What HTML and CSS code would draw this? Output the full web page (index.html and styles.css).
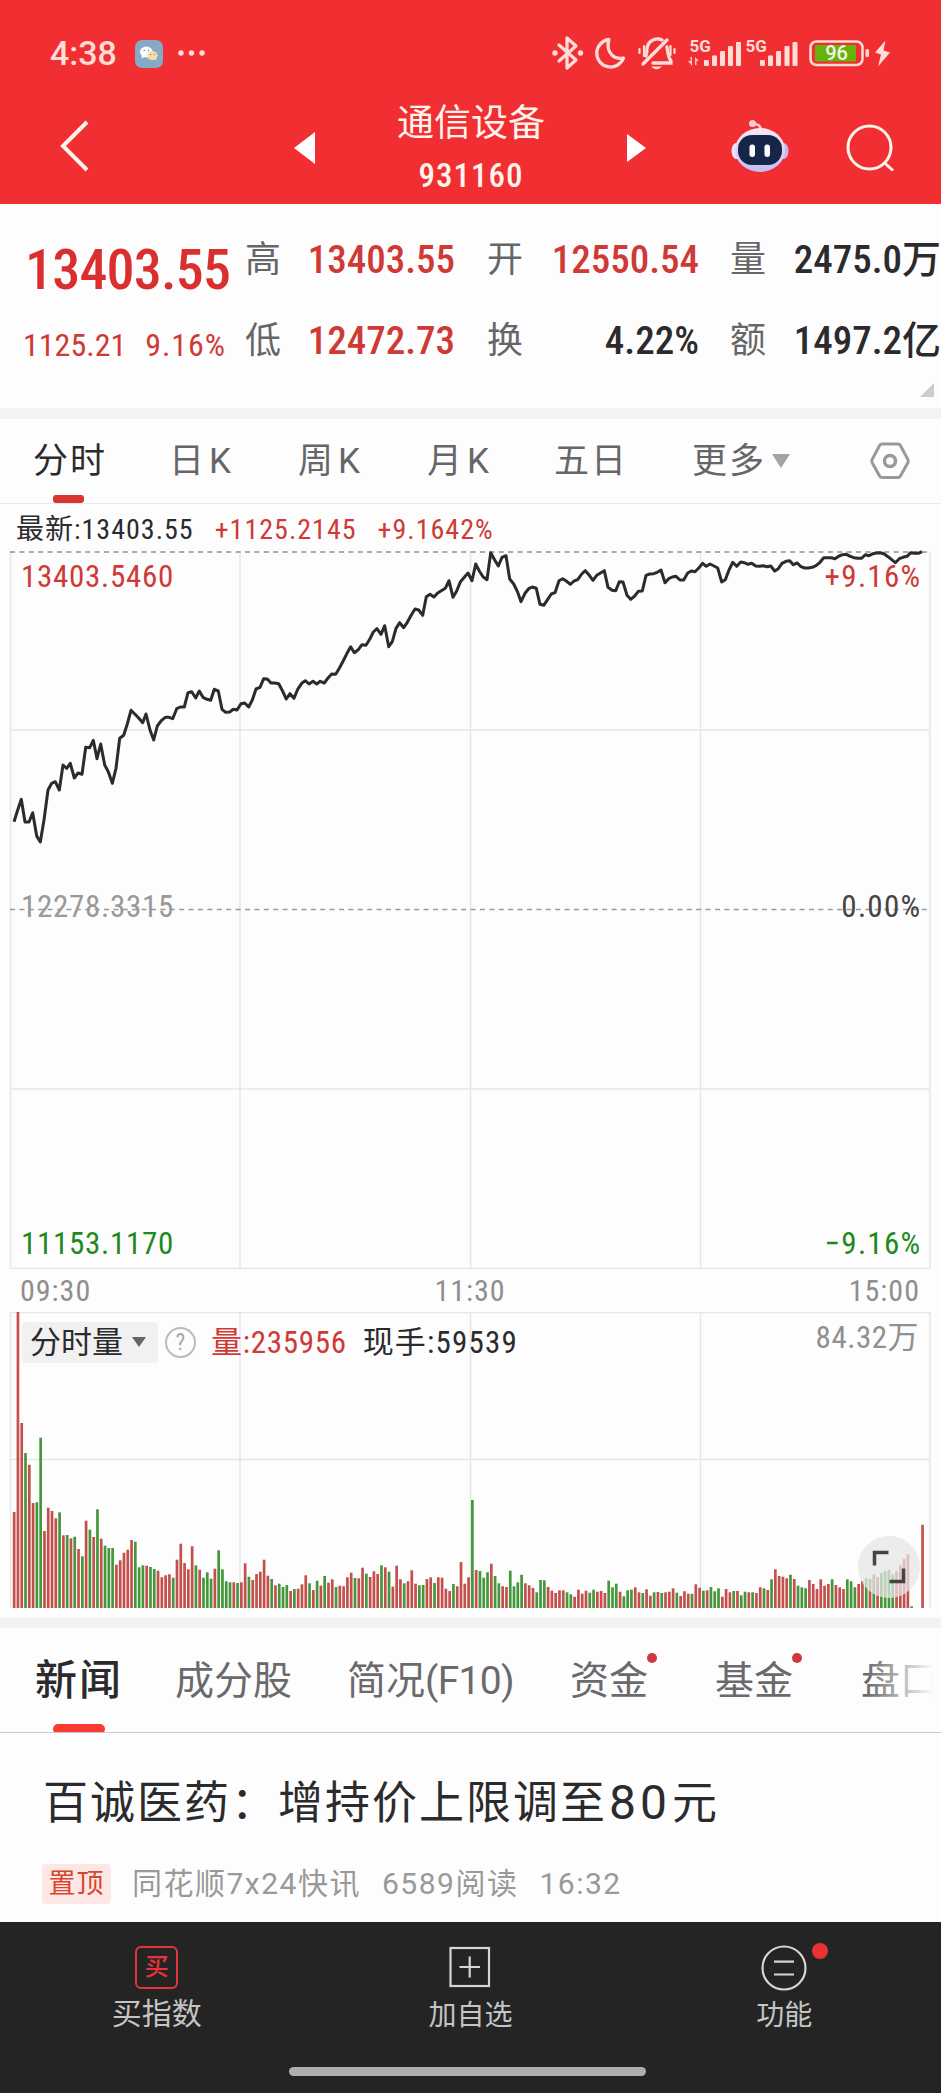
FILE: index.html
```
<!DOCTYPE html>
<html lang="zh-CN">
<head>
    <meta charset="UTF-8">
    <meta name="viewport" content="width=device-width, initial-scale=1.0">
    <title>通信设备 931160</title>
    <link rel="stylesheet" href="styles.css">
</head>
<body>
    <header class="header">
        <div class="status-bar">
            <span class="clock">4:38</span>
            <svg class="wechat" width="28" height="28" viewBox="0 0 28 28">
                <rect width="28" height="28" rx="7" fill="#85a9c9"/>
                <ellipse cx="11.3" cy="12" rx="6.3" ry="5.4" fill="#fff"/>
                <path d="M7 15.500l-.8 3 3.400-1.500z" fill="#fff"/>
                <ellipse cx="17.300" cy="15.600" rx="5.300" ry="4.500" fill="#f3e2a4"/>
                <path d="M19 19l2.300 1.800-.2-3z" fill="#f3e2a4"/>
                <g fill="#6f8397">
                    <circle cx="9.200" cy="10.500" r=".8"/><circle cx="13.500" cy="10.500" r=".8"/>
                    <circle cx="15.600" cy="14.400" r=".7"/><circle cx="19.200" cy="14.400" r=".7"/>
                </g>
            </svg>
            <svg class="more-dots" width="27" height="8" viewBox="0 0 27 8" fill="#ffdcd8">
                <circle cx="3" cy="4" r="2.700"/><circle cx="13.500" cy="4" r="2.700"/><circle cx="24" cy="4" r="2.700"/>
            </svg>
            <svg class="status-icons" width="345" height="44" viewBox="550 31 345 44">
                <!-- bluetooth -->
                <g fill="none" stroke="#ffdcd8" stroke-width="3.300" stroke-linejoin="round" stroke-linecap="round">
                    <path d="M559 45l17 15-9 8V38l9 8-17 15"/>
                </g>
                <circle cx="555" cy="53" r="2.700" fill="#ffdcd8"/><circle cx="580.500" cy="53" r="2.700" fill="#ffdcd8"/>
                <!-- do not disturb -->
                <path d="M609 39.500a13.800 13.800 0 1 0 14.500 18.500c-8.500 2-18.500-5-14.500-18.500z" fill="none" stroke="#ffdcd8" stroke-width="3.300" stroke-linejoin="round"/>
                <!-- muted bell -->
                <g fill="none" stroke="#ffdcd8" stroke-width="3.300" stroke-linecap="round">
                    <path d="M667 40l-24 24"/>
                    <path d="M646 56c2-4-1-9 4-14 3-3 8-4 12-2M667 47c1 7 1 10 4 14v2h-18"/>
                    <path d="M644 46v10M639.500 49v4M670.500 46v9M674.500 49v4" stroke-width="2.200"/>
                </g>
                <path d="M651 66.500h11q-5.500 5.500-11 0z" fill="#ffdcd8"/>
                <!-- signal -->
                <text class="net" x="689.500" y="52">5G</text>
                <text class="net" x="745.500" y="52">5G</text>
                <g fill="#ffdcd8">
                    <path d="M688 61h2.500v-4h1.500v9zM699 61h-2.500v4H695v-8z" opacity=".85"/>
                    <rect x="704" y="60" width="5" height="6" rx="1"/><rect x="712" y="55.500" width="5" height="10.500" rx="1"/>
                    <rect x="720" y="51" width="5" height="15" rx="1"/><rect x="728" y="46" width="5" height="20" rx="1"/>
                    <rect x="736" y="42" width="5" height="24" rx="1"/>
                    <rect x="760" y="60" width="5" height="6" rx="1"/><rect x="768" y="55.500" width="5" height="10.500" rx="1"/>
                    <rect x="776" y="51" width="5" height="15" rx="1"/><rect x="784.500" y="46" width="5" height="20" rx="1"/>
                    <rect x="792.500" y="42" width="5" height="24" rx="1"/>
                </g>
                <!-- battery -->
                <rect x="810.500" y="41.500" width="52" height="23.500" rx="6" fill="none" stroke="#ffdcd8" stroke-width="2.500"/>
                <rect x="815" y="45" width="41" height="16.500" rx="1.500" fill="#67b30c"/>
                <rect x="865.500" y="49" width="3.500" height="8" rx="1.500" fill="#ffdcd8"/>
                <text class="battery" x="836.500" y="60" text-anchor="middle">96</text>
                <path d="M885.500 40.500l-10.500 12 6 2-3 12 12-14-6.500-2z" fill="#ffdcd8"/>
            </svg>
        </div>
        <div class="title-bar">
            <svg class="back" width="32" height="52" viewBox="0 0 32 52" fill="none" stroke="#fff4ec" stroke-width="4">
                <path d="M28 2L4 26l24 24"/>
            </svg>
            <svg class="prev" width="21" height="32" viewBox="0 0 21 32" fill="#fff"><path d="M21 0v32L0 16z"/></svg>
            <div class="title">
                <h1>通信设备</h1>
                <p>931160</p>
            </div>
            <svg class="next" width="19" height="28" viewBox="0 0 19 28" fill="#fff"><path d="M0 0l19 14L0 28z"/></svg>
            <svg class="robot" width="58" height="54" viewBox="0 0 58 54">
                <defs>
                    <linearGradient id="shell" x1="0" y1="0" x2="0" y2="1">
                        <stop offset="0" stop-color="#fbe9f2"/><stop offset="1" stop-color="#c3bef2"/>
                    </linearGradient>
                </defs>
                <path d="M21 5q9-1 9 7" fill="none" stroke="#f6cfdc" stroke-width="2.500"/>
                <circle cx="21.500" cy="4.500" r="3.500" fill="#f9c9d0"/>
                <ellipse cx="5.500" cy="32" rx="5" ry="8" fill="#f1e4f6"/>
                <ellipse cx="52.500" cy="32" rx="5" ry="8" fill="#c9b8ee"/>
                <ellipse cx="29" cy="31" rx="25" ry="22" fill="url(#shell)"/>
                <rect x="7" y="16" width="44" height="30" rx="14" fill="#16264a"/>
                <rect x="18.500" y="25.500" width="5.500" height="12.500" rx="2.700" fill="#fff"/>
                <rect x="33.500" y="25.500" width="5.500" height="12.500" rx="2.700" fill="#fff"/>
            </svg>
            <svg class="search" width="48" height="48" viewBox="0 0 48 48" fill="none" stroke="#fff4ec" stroke-width="3">
                <circle cx="23.500" cy="23.500" r="21.500"/><path d="M37.500 38l9.500 8.500"/>
            </svg>
        </div>
    </header>

    <section class="quote">
        <div class="price">13403.55</div>
        <div class="label">高</div><div class="value up">13403.55</div>
        <div class="label">开</div><div class="value up">12550.54</div>
        <div class="label">量</div><div class="value">2475.0万</div>
        <div class="change"><span>1125.21</span><span class="percent">9.16%</span></div>
        <div class="label">低</div><div class="value up">12472.73</div>
        <div class="label">换</div><div class="value">4.22%</div>
        <div class="label">额</div><div class="value">1497.2亿</div>
        <i class="corner"></i>
    </section>

    <nav class="period-tabs">
        <a class="active">分时</a>
        <a class="k">日K</a>
        <a class="k">周K</a>
        <a class="k">月K</a>
        <a>五日</a>
        <a>更多<i class="caret"></i></a>
        <svg width="40" height="38" viewBox="0 0 40 38" fill="none" stroke="#999" stroke-width="3">
            <path d="M12 2h16q1.500 0 2.300 1.300l7.500 14q.8 1.700 0 3.400l-7.500 13.500q-.8 1.300-2.300 1.300H12q-1.500 0-2.300-1.300l-7.500-13.500q-.8-1.700 0-3.400l7.500-14Q10.500 2 12 2z"/>
            <circle cx="20" cy="19" r="5.500" stroke-width="3.500"/>
        </svg>
    </nav>

    <section class="chart">
        <div class="latest">
            <span>最新:13403.55</span>
            <span class="up">+1125.2145</span>
            <span class="up">+9.1642%</span>
        </div>
        <svg class="price-chart" width="941" height="720" viewBox="0 549 941 720">
            <g class="grid">
                <path d="M10.500 551V1268.500H930V551M240 551v717M470.500 551v717M700.500 551v717M10 730h919M10 1089h919"/>
            </g>
            <path class="dashed olive" d="M10 552h918"/>
            <path class="dashed" d="M10 909.500h918"/>
            <text class="up" x="21" y="587">13403.5460</text>
            <text class="up wide" x="921.500" y="587" text-anchor="end">+9.16%</text>
            <text class="flat" x="21" y="917">12278.3315</text>
            <text class="dark wide" x="921.500" y="917" text-anchor="end">0.00%</text>
            <text class="down" x="21" y="1254">11153.1170</text>
            <text class="down wide" x="921.500" y="1254" text-anchor="end">−9.16%</text>
            <polyline id="line"/>
        </svg>
        <div class="times"><span>09:30</span><span>11:30</span><span>15:00</span></div>
        <div class="volume">
            <svg width="941" height="298" viewBox="0 0 941 298">
                <g class="grid">
                    <path d="M10.500 296V.5H930V296M240 0v296M470.500 0v296M700.500 0v296M10 147.500h919"/>
                </g>
                <g id="bars"></g>
            </svg>
            <div class="volume-head">
                <span class="picker">分时量<i class="caret"></i></span>
                <span class="help">?</span>
                <span class="up">量:235956</span>
                <span class="hands">现手:59539</span>
                <span class="max">84.32万</span>
            </div>
            <svg class="expand" width="62" height="62" viewBox="0 0 62 62">
                <circle cx="31" cy="31" r="31" fill="#e6e6e6" opacity=".75"/>
                <path d="M16.500 29.500v-13h14M45.500 32.500v13h-14" fill="none" stroke="#444" stroke-width="3.500"/>
            </svg>
        </div>
    </section>

    <nav class="news-tabs">
        <a class="active">新闻</a>
        <a>成分股</a>
        <a>简况<span>(F10)</span></a>
        <a class="dot">资金</a>
        <a class="dot">基金</a>
        <a>盘口</a>
    </nav>

    <article class="news">
        <h2>百诚医药：增持价上限调至<span>80</span>元</h2>
        <div class="meta">
            <span class="tag">置顶</span>
            <span>同花顺7x24快讯</span>
            <span>6589阅读</span>
            <span>16:32</span>
        </div>
    </article>

    <footer class="bottom-bar">
        <a class="buy">
            <span class="buy-icon">买</span>
            买指数
        </a>
        <a>
            <svg width="44" height="44" viewBox="0 0 44 44" fill="none" stroke="#d6d6d6" stroke-width="2.200">
                <rect x="2.500" y="3" width="38.500" height="38"/><path d="M21.700 11.500v21M11.500 22h20.500"/>
            </svg>
            加自选
        </a>
        <a class="more">
            <svg width="46" height="46" viewBox="0 0 46 46" fill="none" stroke="#d6d6d6" stroke-width="2.200">
                <circle cx="23" cy="23" r="21.500"/><path d="M13 16.700h20M13 29.500h20"/>
            </svg>
            功能
        </a>
        <i class="home"></i>
    </footer>

    <script src="chart.js"></script>
</body>
</html>
```
FILE: styles.css
```
* {
    box-sizing: border-box;
}
body {
    margin: 0;
    width: 941px;
    background: #fdfdfd;
    color: #2b2b2d;
    font-family: Roboto, "Noto Sans CJK SC", sans-serif;
}
h1, h2, p {
    margin: 0;
    font-weight: 400;
}
svg {
    display: block;
    flex: none;
}
.up {
    color: #cf3a36;
    fill: #cf3a36;
}
.down {
    fill: #1c8a1c;
}
.flat {
    fill: #999;
}
.dark {
    fill: #444;
}

/* header */
.header {
    height: 204px;
    background: #f12f33;
    color: #fff4ec;
}
.status-bar {
    display: flex;
    align-items: center;
    height: 75px;
    padding: 31px 46px 0 50px;
}
.clock {
    width: 85px;
    font-size: 34px;
    line-height: 44px;
    font-weight: 500;
    color: #ffdcd8;
}
.more-dots {
    margin: 0 0 0 15px;
}
.wechat {
    margin-top: 2px;
}
.status-icons {
    margin-left: auto;
}
.net {
    font-size: 17px;
    font-weight: 700;
    fill: #ffdcd8;
}
.battery {
    font-size: 20px;
    font-weight: 500;
    fill: #f4f7e4;
}
.title-bar {
    display: flex;
    align-items: center;
    height: 129px;
    padding: 13px 47px 0 59px;
}
.prev {
    margin: 3px 0 0 203px;
}
.title {
    width: 312px;
    text-align: center;
    padding-top: 4px;
}
.title h1 {
    font-size: 37px;
    line-height: 56px;
}
.title p {
    font-size: 33px;
    line-height: 48px;
    font-weight: 500;
    font-stretch: 75%;
    letter-spacing: 1px;
}
.next {
    margin-top: 3px;
}
.robot {
    margin: 0 0 0 85px;
}
.search {
    margin: 3px 0 0 auto;
}

/* quote */
.quote {
    position: relative;
    display: grid;
    grid-template-columns: 220px 36px 174px 68px 176px 67px 175px;
    grid-auto-rows: 81px;
    height: 204px;
    padding: 16px 0 0 25px;
    line-height: 81px;
    white-space: nowrap;
}
.price,
.change {
    color: #d9302f;
    font-stretch: 75%;
    font-weight: 500;
}
.price {
    padding-top: 19px;
    font-size: 56px;
    line-height: 63px;
    letter-spacing: -.8px;
}
.change {
    display: flex;
    gap: 19px;
    margin-left: -2px;
    padding-top: 8px;
    font-size: 32px;
    line-height: 73px;
    font-weight: 400;
    color: #cf3a36;
}
.percent {
    letter-spacing: .9px;
}
.label {
    text-align: right;
    font-size: 36px;
    color: #666668;
}
.value {
    text-align: right;
    font-size: 39px;
    font-weight: 500;
    font-stretch: 75%;
}
.corner {
    position: absolute;
    right: 7px;
    bottom: 11px;
    border: 7px solid #ccc;
    border-left-color: transparent;
    border-top-color: transparent;
}

/* period tabs */
.period-tabs {
    display: grid;
    grid-template-columns: 136px 129px 129px 127px 138px 178px 1fr;
    align-items: center;
    height: 96px;
    padding-left: 33px;
    border-top: 11px solid #f3f3f3;
    border-bottom: 1px solid #e9e9e9;
    font-size: 35px;
    letter-spacing: 2px;
    color: #666668;
}
.period-tabs a {
    position: relative;
    height: 84px;
    line-height: 86px;
}
.period-tabs .k {
    letter-spacing: 5px;
}
.period-tabs .active {
    color: #2b2b2d;
}
.period-tabs .active::after {
    content: "";
    position: absolute;
    left: 20px;
    bottom: 0;
    width: 31px;
    height: 8px;
    border-radius: 3px;
    background: #d9342f;
}
.caret {
    display: inline-block;
    border: 9px solid transparent;
    border-top: 14px solid #a3a3a3;
    border-bottom: 0;
    margin-left: 6px;
    vertical-align: 5px;
}

/* intraday chart */
.latest {
    display: flex;
    gap: 21px;
    height: 45px;
    padding-left: 16px;
    font-size: 28px;
    line-height: 51px;
    font-stretch: 75%;
    letter-spacing: 1px;
}
.price-chart text {
    font-size: 31px;
    font-stretch: 75%;
    letter-spacing: .7px;
}
.price-chart .wide {
    letter-spacing: 1.3px;
}
.grid path {
    fill: none;
    stroke: #e6e6e8;
    stroke-width: 1.5;
}
.dashed {
    stroke: #999;
    stroke-width: 1.500;
    stroke-dasharray: 5 4.400;
}
.olive {
    stroke: #93937a;
}
#line {
    fill: none;
    stroke: #2b2b2d;
    stroke-width: 3;
    stroke-linejoin: round;
}
.times {
    display: flex;
    justify-content: space-between;
    height: 43px;
    padding: 0 21px 0 20px;
    font-size: 30px;
    line-height: 43px;
    font-stretch: 75%;
    letter-spacing: 1px;
    color: #8e8e8e;
}
.volume {
    position: relative;
    height: 306px;
}
.volume-head {
    position: absolute;
    top: 10px;
    left: 22px;
    right: 22px;
    display: flex;
    align-items: center;
    height: 41px;
    font-size: 31px;
    line-height: 41px;
    font-stretch: 75%;
    letter-spacing: .5px;
}
.picker {
    width: 136px;
    height: 41px;
    padding-left: 8px;
    margin-right: 7px;
    border-radius: 4px;
    background: #f1f1f1;
    letter-spacing: 0;
}
.picker .caret {
    border-width: 10px 7px 0;
    border-top-color: #666;
    margin-left: 9px;
    vertical-align: 6px;
}
.help {
    width: 31px;
    height: 31px;
    margin-right: 15px;
    border: 2px solid #bbb;
    border-radius: 50%;
    font-size: 23px;
    line-height: 28px;
    text-align: center;
    color: #a8a8a8;
}
.volume-head .up {
    margin-right: 16px;
    letter-spacing: .7px;
}
.hands {
    letter-spacing: 1.200px;
}
.volume-head .max {
    margin: -10px 0 0 auto;
    color: #909090;
}
.expand {
    position: absolute;
    left: 858px;
    top: 224px;
}
.bar-up {
    fill: #c4504e;
}
.bar-down {
    fill: #44973a;
}

/* news */
.news-tabs {
    position: relative;
    display: grid;
    grid-template-columns: 140px 172px 223px 145px 146px 1fr;
    height: 115px;
    padding-left: 35px;
    border-top: 10px solid #f2f2f4;
    border-bottom: 1px solid #ccc;
    font-size: 39px;
    line-height: 106px;
    color: #6a6a6c;
    white-space: nowrap;
    overflow: hidden;
}
.news-tabs span {
    letter-spacing: -.7px;
}
.news-tabs::after {
    content: "";
    position: absolute;
    top: 0;
    right: 0;
    width: 75px;
    height: 100px;
    background: linear-gradient(to right, rgba(253, 253, 253, 0), #fdfdfd 90%);
}
.news-tabs a {
    position: relative;
}
.news-tabs .active {
    font-size: 42px;
    font-weight: 500;
    letter-spacing: 2px;
    color: #2b2b2d;
}
.news-tabs .active::after {
    content: "";
    position: absolute;
    left: 18px;
    bottom: 0;
    width: 52px;
    height: 10px;
    border-radius: 5px;
    background: #fb3b32;
}
.news-tabs .dot::after {
    content: "";
    position: absolute;
    left: 77px;
    top: 25px;
    width: 10px;
    height: 10px;
    border-radius: 50%;
    background: #d0363b;
}
.news {
    height: 189px;
    padding: 36px 0 0 43px;
}
.news h2 {
    font-size: 45px;
    line-height: 70px;
    letter-spacing: 2px;
}
.news h2 span {
    font-size: 48px;
    line-height: 1;
    letter-spacing: 4px;
    margin: 0 1px 0 2px;
}
.meta {
    display: flex;
    align-items: center;
    gap: 21px;
    margin-top: 25px;
    font-size: 30px;
    line-height: 40px;
    letter-spacing: 1.500px;
    color: #999;
}
.tag {
    width: 69px;
    margin-left: -1px;
    border-radius: 4px;
    background: #fde7e4;
    color: #d9452f;
    font-size: 27px;
    letter-spacing: 1px;
    text-align: center;
}

/* bottom bar */
.bottom-bar {
    position: relative;
    display: grid;
    grid-template-columns: repeat(3, 1fr);
    height: 171px;
    background: #242424;
    color: #c4c4c4;
    font-size: 28px;
}
.bottom-bar a {
    position: relative;
    display: flex;
    flex-direction: column;
    align-items: center;
    gap: 3px;
    padding-top: 23px;
    line-height: 48px;
}
.bottom-bar .buy {
    gap: 0;
    font-size: 30px;
}
.buy-icon {
    width: 43px;
    height: 43px;
    margin: 1px 0;
    border: 2.500px solid #e0373c;
    border-radius: 6px;
    font-size: 24px;
    line-height: 38px;
    font-weight: 500;
    text-align: center;
    color: #e8333c;
}
.bottom-bar .more {
    gap: 1px;
}
.more::after {
    content: "";
    position: absolute;
    left: 185px;
    top: 21px;
    width: 16px;
    height: 16px;
    border-radius: 50%;
    background: #e93333;
}
.home {
    position: absolute;
    left: 289px;
    top: 145px;
    width: 357px;
    height: 9px;
    border-radius: 5px;
    background: #aeaeae;
}
```
FILE: chart.js
```
// [x, y] pairs of the intraday line, in thirds of a pixel
const price = `42,965 53,930 64,898 75,966 87,966 98,938 110,1008 121,1026 132,960 144,870 155,850 166,845 178,870
189,795 200,805 211,790 223,834 234,819 246,823 257,742 269,743 280,721 291,776 302,732 314,795 325,815 337,850
348,805 359,715 371,706 382,672 393,631 405,643 416,654 428,668 438,642 450,690 461,720 472,678 484,662 496,652
507,652 518,656 530,626 541,621 553,621 564,578 575,575 587,594 598,573 609,592 621,598 632,601 643,568 655,573
666,628 677,637 689,636 700,628 711,630 723,611 734,609 746,621 757,600 768,567 780,562 791,536 802,537 813,549
825,549 836,551 848,574 859,597 870,581 882,595 893,568 905,550 916,542 927,552 939,544 950,552 961,544 973,549
984,534 995,522 1007,523 1018,505 1030,482 1041,460 1052,440 1063,458 1075,449 1086,434 1098,436 1109,418
1120,396 1131,386 1143,403 1154,377 1166,440 1177,425 1188,385 1199,368 1211,383 1222,367 1234,345 1245,327
1256,330 1268,346 1279,290 1290,283 1302,291 1313,279 1324,272 1336,265 1347,242 1359,292 1370,273 1381,246
1393,232 1404,219 1416,242 1427,192 1438,213 1449,230 1461,239 1472,158 1484,180 1495,198 1506,172 1518,167
1529,237 1541,252 1552,274 1563,305 1575,280 1586,266 1597,261 1609,265 1620,313 1631,316 1643,298 1654,282
1665,278 1677,242 1688,236 1699,243 1711,253 1722,243 1733,239 1745,222 1756,212 1768,226 1779,241 1790,226
1813,212 1824,262 1836,271 1847,272 1858,245 1869,246 1881,286 1892,298 1904,288 1915,274 1927,273 1938,226
1949,222 1961,221 1972,217 1983,210 1995,248 2006,236 2017,231 2028,229 2040,240 2051,240 2063,219 2074,213
2085,215 2097,203 2108,190 2119,199 2130,192 2142,198 2153,204 2165,246 2176,239 2187,210 2198,187 2210,199
2222,186 2233,188 2244,193 2255,190 2267,198 2278,199 2290,197 2301,200 2312,198 2324,213 2335,206 2346,190
2358,184 2369,182 2380,194 2392,189 2403,200 2414,204 2425,204 2437,202 2448,197 2460,187 2471,173 2482,173
2494,173 2505,176 2517,168 2528,164 2539,163 2551,169 2562,173 2573,175 2585,175 2596,164 2607,167 2619,161
2630,159 2641,158 2653,162 2664,170 2675,179 2686,188 2698,176 2709,172 2721,169 2732,158 2743,160 2755,160
2766,155`;

document.getElementById('line').setAttribute('points', price.split(/\s+/).map(p => {
    const [x, y] = p.split(',');
    return (x / 3).toFixed(1) + ',' + (500 + y / 3).toFixed(1);
}).join(' '));

// one entry per minute, negative when the price fell
const volume = [
    288, 888, 555, -465, 430, 315, -317, -511, 231, 301, 291, 269, -287, 218, -219, 209, -214, 177, -155, 262,
    -235, 213, -296, 208, -187, -180, -180, 130, 143, 166, 175, 204, -199, -122, -128, 127, -123, -117, 112, 92,
    98, 101, -91, 145, 193, 135, 116, 185, -128, 115, -91, -107, -88, 118, -173, -116, -80, -77, 77, -75,
    77, 134, -94, 84, 102, 109, 145, 97, -87, 68, -73, -63, -69, 51, -57, 58, 71, 98, -74, 54,
    -82, 67, -96, 76, 86, -63, 67, 65, 92, 106, -90, 89, 121, -103, 93, 110, 102, -128, 122, -109,
    64, 127, 86, -74, 80, 113, 73, -68, -69, 87, 92, -75, 92, 91, 58, 51, -72, 65, 138, 73,
    92, -324, 114, -111, -91, -107, 133, -96, -74, 65, 63, -112, -65, -77, -100, 74, 68, 60, -47, -84,
    -83, 63, 52, 45, 53, 53, -47, -41, 34, 55, 43, 52, -46, -55, 49, 51, 45, -82, -62, -73,
    49, -35, -53, -55, 62, 47, -45, 56, 37, -47, 48, -45, 47, 49, 59, -46, 36, 50, 43, -43,
    71, 61, -52, 53, -63, -50, -59, 34, 57, 47, -51, 51, -38, -49, 47, -47, 45, 62, -59, 54,
    -86, 116, 96, 94, 89, -100, 87, -67, -62, -59, 84, 72, 57, 86, 67, 72, -86, 69, 62, 57,
    -86, -80, -62, 72, 81, -89, 87, -101, 93, -105, -111, -114, -101, 110, 128, 148, 161, -5, 0, 250
];

document.getElementById('bars').innerHTML = volume.map((v, i) => {
    const h = Math.abs(v) / 3;
    const x = i < 239 ? 12.8 + i * 3.787 : 921.2;
    return `<rect class="${v < 0 ? 'bar-down' : 'bar-up'}" x="${x.toFixed(2)}" y="${(296 - h).toFixed(1)}" width="2.700" height="${h.toFixed(1)}"/>`;
}).join('');
```
